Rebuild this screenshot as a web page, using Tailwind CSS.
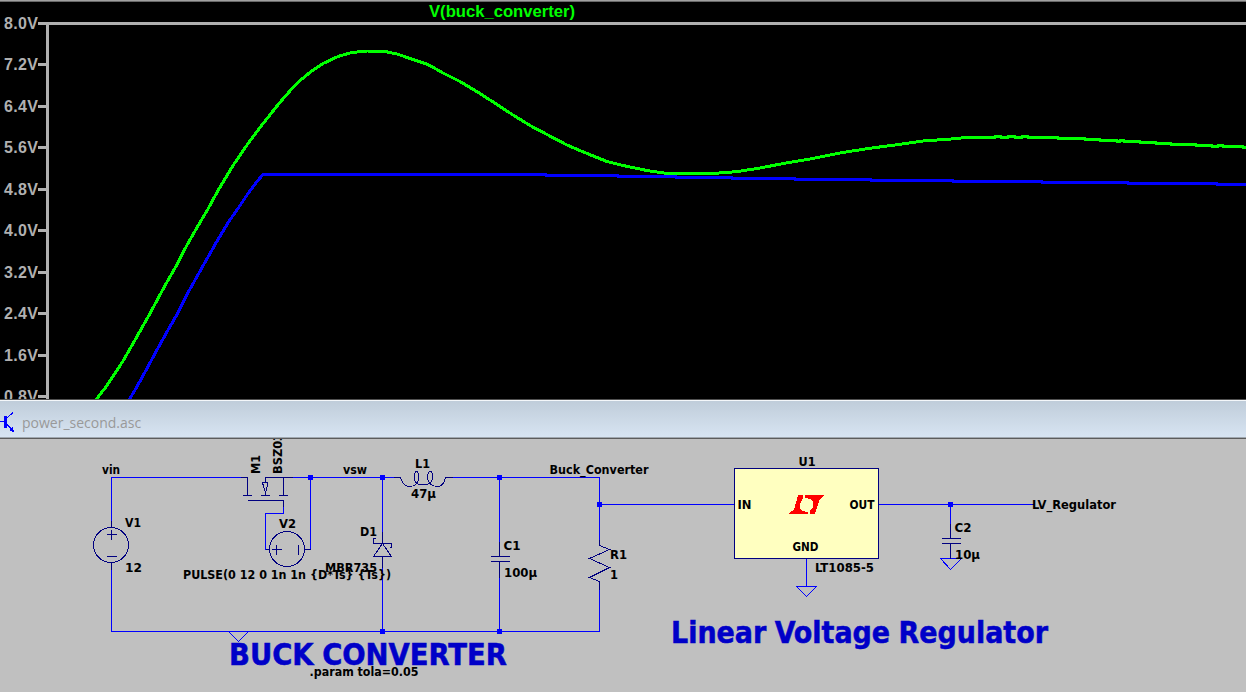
<!DOCTYPE html>
<html lang="en">
<head>
<meta charset="utf-8">
<title>power_second.asc</title>
<script src="https://cdn.jsdelivr.net/npm/@tailwindcss/browser@4"></script>
</head>
<body class="flex h-[692px] w-[1246px] flex-col overflow-hidden bg-[#c0c0c0]">
<!-- Waveform viewer -->
<section class="h-[399px] shrink-0 overflow-hidden bg-black">
<svg class="block h-[399px] w-[1246px]" viewBox="0 0 1246 399">
  <rect width="1246" height="1" fill="#a0a0a0"/><rect y="1" width="1246" height="1" fill="#696969"/>
  <g fill="#b0b0b0">
    <rect x="46" y="22" width="3" height="377"/><rect x="38" y="22" width="1208" height="3"/>
    <rect x="38" y="63" width="8" height="3"/><rect x="38" y="105" width="8" height="3"/><rect x="38" y="146" width="8" height="3"/><rect x="38" y="188" width="8" height="3"/><rect x="38" y="229" width="8" height="3"/><rect x="38" y="271" width="8" height="3"/><rect x="38" y="312" width="8" height="3"/><rect x="38" y="354" width="8" height="3"/><rect x="38" y="395" width="8" height="3"/>
  </g>
  <g class="font-['Liberation_Sans',sans-serif] text-[16px] font-bold" fill="#b0b0b0">
    <text x="4" y="29" textLength="34">8.0V</text><text x="4" y="70" textLength="34">7.2V</text><text x="4" y="112" textLength="34">6.4V</text><text x="4" y="153" textLength="34">5.6V</text><text x="4" y="195" textLength="34">4.8V</text><text x="4" y="236" textLength="34">4.0V</text><text x="4" y="278" textLength="34">3.2V</text><text x="4" y="319" textLength="34">2.4V</text><text x="4" y="361" textLength="34">1.6V</text><text x="4" y="402" textLength="34">0.8V</text>
    <text x="429" y="17" textLength="146" lengthAdjust="spacingAndGlyphs" fill="#00ff00">V(buck_converter)</text>
  </g>
  <g fill="none" stroke-width="3" stroke-linejoin="round" shape-rendering="crispEdges">
    <path stroke="#0000ff" d="M128.500 401L135 390L141.500 378.500L155 353.500L166 333.500L177 314.500L187 294.500L201.500 268.500L216.500 242L228.500 222L238 208.500L248 193.500L257 181.500L263 174.500H546V175.500H618V176.500H676V177.500H732V178.500H795V179.500H871V180.500H953V181.500H1042V182.500H1128V183.500H1217V184.500H1246"/>
    <path stroke="#00ff00" d="M95 401L107 385.500L123 361L135 340L150 313.500L165 285.500L177 264.500L187 245L197 227.500L208 209L218 190.500L233 165.500L247 145L260 127.500L277 106L285 96.500L293 87.500L300 80.500L313 70L323 63.500L338 56.500L352 52.500L367 51L385 51.500L397 54L413 59.500L428 64.500L443 73L460 81.500L480 93.500L500 106.500L513 115L530 125.500L547 134.500L567 145L587 153.500L607 161.500L623 165.500L647 170.500L667 173.500L713 173.500L738 171.500L760 168L786 163L810 159L840 153L868 148.500L895 145L923 141L951 139L966 137.500H995V136.500H1001V137.500H1008V136.500H1015V137.500H1022V136.500H1028V137.500H1058V138.500H1085V139.500H1100V140.500H1117V141.500H1120V140.500H1124V141.500H1140V142.500H1156V143.500H1171V144.500H1196V145.500H1212V146.500H1218V145.500H1223V146.500H1243V147.500H1246"/>
  </g>
</svg>
</section>
<!-- Schematic window title bar -->
<header class="flex h-[40px] shrink-0 items-center border-t border-b border-t-[#505050] border-b-[#5c5c5c] bg-linear-to-b from-[#bfccd9] to-[#d8e5f3] shadow-[inset_0_1px_#f4f7fa,inset_0_-1px_#a0a8b0]">
  <svg class="h-[24px] w-[22px] shrink-0" viewBox="0 407 22 24" overflow="visible" shape-rendering="crispEdges" fill="none" stroke="#0000ff">
    <path fill="#0000ff" stroke="none" d="M4 416h3v12H4zM10 429h2v-2h1v3h1v2h-2v-1h-2z"/><path d="M0 421.500H5M7 418L13 412.500"/><path stroke-width="2" d="M7 424.500L13 430.500"/>
  </svg>
  <span class="mt-[7px] font-['Open_Sans',sans-serif] text-[14px] text-[#999999]">power_second.asc</span>
</header>
<!-- Schematic canvas -->
<main class="h-[253px] shrink-0 overflow-hidden bg-[#c0c0c0]">
<svg class="block h-[253px] w-[1246px]" viewBox="0 439 1246 253">
  <g transform="translate(.5 .5)" fill="none" stroke="#0000ff" shape-rendering="crispEdges">
    <path d="M111 520V477H241M111 569V631H599V589M292 477H393M310 477V549H305M283 506V513H265V549H268M382 477V531M382 567V631M452 477H599V539M499 477V541M499 577V631M599 504H734M806 558V586M878 504H1033M950 504V523"/>
    <path d="M228 631L238 641L248 631M796 586H816L806 596ZM940 558H961L950 569Z"/>
    <g stroke="#000080">
      <path d="M240 477H247V495M242 495H251M265 482V477H292M265 492V495M260 495H269M283 477V495M278 495H287M247 500H283V506M262 482H267V485L265 492L263 486Z"/>
      <circle cx="110.500" cy="544.500" r="17.500"/><path d="M111 520V527M111 562V569M106 534H116M111 529V539M106 556H116"/>
      <circle cx="286.500" cy="548.500" r="17.500"/><path d="M265 549H269M304 549H310M271 549H281M276 544V554M298 544V554"/>
      <path d="M393 477H400C402 484 405 486 409 486C415 486 418 482 418 477C418 473 417 471 416 471C415 471 414 473 414 477C414 481 416 484 420 484H424C429 484 432 481 432 477C432 473 431 471 430 471C428 471 427 474 427 477C427 482 431 486 437 486C442 486 444 482 445 477H452"/>
      <path d="M382 531V543M375 538H373V543H391V547H389M382 543L373 556H391ZM382 556V567"/>
      <path d="M499 541V556M490 556H509M490 561H509M499 561V577M950 523V538M941 538H960M941 543H960M950 543V558"/>
      <path d="M599 539V545L609 549L589 558L609 567L589 577L599 581V589"/>
      <rect x="734" y="468" width="144" height="90" fill="#ffffc0"/>
    </g>
    <g fill="#0000ff" stroke="none"><path d="M308 475h5v5h-5zM380 475h5v5h-5zM497 475h5v5h-5zM597 502h5v5h-5zM948 502h5v5h-5zM380 629h5v5h-5zM497 629h5v5h-5z" transform="translate(-.5 -.5)"/></g>
  </g>
  <path fill="#ff0000" shape-rendering="crispEdges" d="M798 495h5v3l-3 6v4l2 3l6 1v2h-19v-1l5-3zM805 495h19l-5 6l-4 13h-5v-3l3-4v-5l-2-3l-6-1z"/>
  <g class="font-['DejaVu_Sans_Condensed','DejaVu_Sans',sans-serif] text-[12px] font-bold" fill="#000">
    <text x="102" y="474" textLength="18" lengthAdjust="spacingAndGlyphs">vin</text>
    <text x="125" y="527" textLength="16" lengthAdjust="spacingAndGlyphs">V1</text>
    <text x="125" y="572" textLength="17" lengthAdjust="spacingAndGlyphs">12</text>
    <text transform="translate(260 474) rotate(-90)" textLength="19" lengthAdjust="spacingAndGlyphs">M1</text>
    <text transform="translate(282 474) rotate(-90)" textLength="49" lengthAdjust="spacingAndGlyphs">BSZ036</text>
    <text x="279" y="528" textLength="17" lengthAdjust="spacingAndGlyphs">V2</text>
    <text x="183" y="579" textLength="208" lengthAdjust="spacingAndGlyphs">PULSE(0 12 0 1n 1n {D*Ts} {Ts})</text>
    <text x="343" y="474" textLength="24" lengthAdjust="spacingAndGlyphs">vsw</text>
    <text x="415" y="468" textLength="15" lengthAdjust="spacingAndGlyphs">L1</text>
    <text x="411" y="498" textLength="25" lengthAdjust="spacingAndGlyphs">47µ</text>
    <text x="360" y="536" textLength="17" lengthAdjust="spacingAndGlyphs">D1</text>
    <text x="325" y="572" textLength="52" lengthAdjust="spacingAndGlyphs">MBR735</text>
    <text x="503.500" y="550" textLength="17" lengthAdjust="spacingAndGlyphs">C1</text>
    <text x="504" y="577" textLength="33" lengthAdjust="spacingAndGlyphs">100µ</text>
    <text x="549.500" y="474" textLength="99" lengthAdjust="spacingAndGlyphs">Buck_Converter</text>
    <text x="610" y="559" textLength="17" lengthAdjust="spacingAndGlyphs">R1</text>
    <text x="610" y="579" textLength="8" lengthAdjust="spacingAndGlyphs">1</text>
    <text x="798.500" y="466" textLength="17" lengthAdjust="spacingAndGlyphs">U1</text>
    <text x="737.500" y="509" textLength="14" lengthAdjust="spacingAndGlyphs">IN</text>
    <text x="849.500" y="509" textLength="25" lengthAdjust="spacingAndGlyphs">OUT</text>
    <text x="792.500" y="551" textLength="26" lengthAdjust="spacingAndGlyphs">GND</text>
    <text x="815" y="572" textLength="59" lengthAdjust="spacingAndGlyphs">LT1085-5</text>
    <text x="1032" y="509" textLength="84" lengthAdjust="spacingAndGlyphs">LV_Regulator</text>
    <text x="954.500" y="532" textLength="17" lengthAdjust="spacingAndGlyphs">C2</text>
    <text x="955" y="559" textLength="25" lengthAdjust="spacingAndGlyphs">10µ</text>
    <g class="text-[29.500px]" fill="#0000c8" stroke="#0000c8" stroke-width=".5" word-spacing="-1">
      <text x="229" y="665" textLength="278" lengthAdjust="spacingAndGlyphs">BUCK CONVERTER</text>
      <text x="671" y="643" textLength="377" lengthAdjust="spacingAndGlyphs">Linear Voltage Regulator</text>
    </g>
    <text x="309.500" y="676" textLength="109" lengthAdjust="spacingAndGlyphs">.param tola=0.05</text>
  </g>
</svg>
</main>
</body>
</html>
